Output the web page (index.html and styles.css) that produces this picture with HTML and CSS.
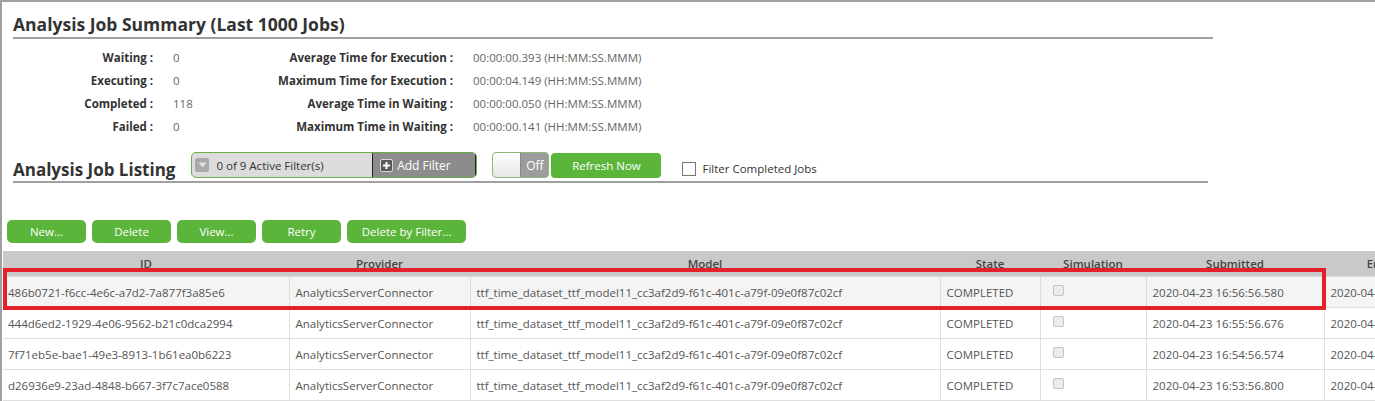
FILE: index.html
```html
<!DOCTYPE html>
<html lang="en">
<head>
<meta charset="utf-8">
<title>Analysis Jobs</title>
<link rel="stylesheet" href="styles.css">
</head>
<body>
<div class="page">
  <section class="summary">
    <h2 class="section-title">Analysis Job Summary (Last 1000 Jobs)</h2>
    <div class="stats">
      <span class="stat-label">Waiting :</span><span class="stat-value">0</span>
      <span class="stat-label">Average Time for Execution :</span><span class="stat-value">00:00:00.393 (HH:MM:SS.MMM)</span>
      <span class="stat-label">Executing :</span><span class="stat-value">0</span>
      <span class="stat-label">Maximum Time for Execution :</span><span class="stat-value">00:00:04.149 (HH:MM:SS.MMM)</span>
      <span class="stat-label">Completed :</span><span class="stat-value">118</span>
      <span class="stat-label">Average Time in Waiting :</span><span class="stat-value">00:00:00.050 (HH:MM:SS.MMM)</span>
      <span class="stat-label">Failed :</span><span class="stat-value">0</span>
      <span class="stat-label">Maximum Time in Waiting :</span><span class="stat-value">00:00:00.141 (HH:MM:SS.MMM)</span>
    </div>
  </section>

  <section class="listing">
    <div class="listing-head">
      <h2 class="section-title inline">Analysis Job Listing</h2>
      <div class="filter-bar">
        <div class="filter-status">
          <span class="filter-drop"><svg width="9" height="6" viewBox="0 0 9 6"><path d="M0.5 0.5h8L4.5 5.5z" fill="#e2e2e2"/></svg></span>
          <span>0 of 9 Active Filter(s)</span>
        </div>
        <div class="filter-add">
          <span class="plus-box"><svg width="9" height="9" viewBox="0 0 9 9"><path d="M4.5 1v7M1 4.5h7" stroke="#fff" stroke-width="2"/></svg></span>
          <span>Add Filter</span>
        </div>
      </div>
      <div class="toggle">
        <span class="toggle-knob"></span>
        <span class="toggle-text">Off</span>
      </div>
      <button class="btn btn-refresh">Refresh Now</button>
      <label class="check-label"><span class="check-box"></span>Filter Completed Jobs</label>
    </div>

    <div class="actions">
      <button class="btn btn-action">New...</button>
      <button class="btn btn-action">Delete</button>
      <button class="btn btn-action">View...</button>
      <button class="btn btn-action">Retry</button>
      <button class="btn btn-action wide">Delete by Filter...</button>
    </div>

    <div class="grid-wrap">
      <table class="jobs">
        <colgroup>
          <col class="c-id"><col class="c-provider"><col class="c-model"><col class="c-state"><col class="c-sim"><col class="c-sub"><col class="c-end">
        </colgroup>
        <thead>
          <tr><th>ID</th><th>Provider</th><th>Model</th><th>State</th><th>Simulation</th><th>Submitted</th><th>Ended</th></tr>
        </thead>
        <tbody>
          <tr class="selected">
            <td>486b0721-f6cc-4e6c-a7d2-7a877f3a85e6</td><td>AnalyticsServerConnector</td><td>ttf_time_dataset_ttf_model11_cc3af2d9-f61c-401c-a79f-09e0f87c02cf</td><td>COMPLETED</td><td class="sim"><span class="sim-box"></span></td><td>2020-04-23 16:56:56.580</td><td>2020-04-23 16:56:57.012</td>
          </tr>
          <tr>
            <td>444d6ed2-1929-4e06-9562-b21c0dca2994</td><td>AnalyticsServerConnector</td><td>ttf_time_dataset_ttf_model11_cc3af2d9-f61c-401c-a79f-09e0f87c02cf</td><td>COMPLETED</td><td class="sim"><span class="sim-box"></span></td><td>2020-04-23 16:55:56.676</td><td>2020-04-23 16:55:57.034</td>
          </tr>
          <tr>
            <td>7f71eb5e-bae1-49e3-8913-1b61ea0b6223</td><td>AnalyticsServerConnector</td><td>ttf_time_dataset_ttf_model11_cc3af2d9-f61c-401c-a79f-09e0f87c02cf</td><td>COMPLETED</td><td class="sim"><span class="sim-box"></span></td><td>2020-04-23 16:54:56.574</td><td>2020-04-23 16:54:56.921</td>
          </tr>
          <tr>
            <td>d26936e9-23ad-4848-b667-3f7c7ace0588</td><td>AnalyticsServerConnector</td><td>ttf_time_dataset_ttf_model11_cc3af2d9-f61c-401c-a79f-09e0f87c02cf</td><td>COMPLETED</td><td class="sim"><span class="sim-box"></span></td><td>2020-04-23 16:53:56.800</td><td>2020-04-23 16:53:57.188</td>
          </tr>
        </tbody>
      </table>
      <div class="highlight"></div>
    </div>
  </section>
</div>
</body>
</html>
```

FILE: styles.css
```css
html, body {
  margin: 0;
  padding: 0;
  background: #fff;
  overflow: hidden;
}

body {
  font-family: "Open Sans", "Noto Sans", sans-serif;
  color: #333;
  border-top: 2px solid #a0a0a0;
  border-left: 2px solid #a0a0a0;
  height: 400px;
  width: 1373px;
}

.page {
  padding-left: 1px;
}

.section-title {
  margin: 0 0 0 10px;
  font-size: 17.5px;
  font-weight: 700;
  color: #333;
  line-height: 22px;
  padding-top: 11px;
  padding-bottom: 2px;
  width: 1200px;
  border-bottom: 2px solid #a0a0a0;
}

/* summary figures */
.stats {
  display: grid;
  grid-template-columns: 140px 80px 180px auto;
  column-gap: 20px;
  grid-auto-rows: 23px;
  align-items: center;
  margin: 7px 0 0 10px;
  font-size: 11.5px;
  white-space: nowrap;
}

.stat-label {
  text-align: right;
  font-weight: 700;
  color: #333;
}

.stat-value {
  color: #666;
}

/* listing header */
.listing-head {
  display: flex;
  align-items: flex-end;
  width: 1195px;
  margin: 14px 0 0 10px;
  border-bottom: 2px solid #a0a0a0;
  padding-bottom: 3px;
}

.section-title.inline {
  margin: 0;
  padding: 0;
  border: 0;
  width: auto;
  font-size: 17px;
  line-height: 22px;
  margin-bottom: -3px;
}

.filter-bar {
  display: flex;
  margin-left: 16px;
  height: 24px;
  width: 284px;
  border: 1px solid #6aae4a;
  border-radius: 5px;
  overflow: hidden;
  background: #dcdcdc;
  font-size: 11.5px;
}

.filter-status {
  display: flex;
  align-items: center;
  gap: 7px;
  width: 178px;
  padding-left: 3px;
  color: #333;
  border-right: 1px solid #222;
}

.filter-drop {
  width: 14px;
  height: 14px;
  background: #a9a9a9;
  border-radius: 2px;
  display: flex;
  align-items: center;
  justify-content: center;
}

.filter-add {
  display: flex;
  align-items: center;
  gap: 4px;
  width: 96px;
  padding-left: 7px;
  background: #8c8c8c;
  color: #fff;
  font-size: 12px;
  border-right: 1px solid #222;
}

.plus-box {
  width: 11px;
  height: 11px;
  border: 1px solid #d8d8d8;
  border-radius: 2px;
  background: #5a5a5a;
  display: flex;
  align-items: center;
  justify-content: center;
}

.toggle {
  display: flex;
  margin-left: 15px;
  height: 24px;
  width: 55px;
  border: 1px solid #8cba78;
  border-radius: 4px;
  overflow: hidden;
  background: #9c9c9c;
}

.toggle-knob {
  width: 27px;
  background: linear-gradient(#ffffff, #e6e6e6);
  border-right: 1px solid #888;
}

.toggle-text {
  flex: 1;
  display: flex;
  align-items: center;
  justify-content: center;
  color: #fff;
  font-size: 12px;
}

.btn {
  font-family: inherit;
  border: 0;
  color: #fff;
  background: #5bb53b;
  font-size: 11.5px;
  padding: 0;
  cursor: pointer;
}

.btn-refresh {
  margin-left: 2px;
  width: 110px;
  height: 25px;
  border-radius: 4px;
}

.check-label {
  display: flex;
  align-items: center;
  gap: 6px;
  margin-left: 21px;
  margin-bottom: 2px;
  font-size: 11.5px;
  color: #333;
}

.check-box {
  width: 12px;
  height: 12px;
  border: 1px solid #777;
  background: #fff;
}

/* action buttons */
.actions {
  display: flex;
  gap: 6px;
  margin: 37px 0 0 4px;
}

.btn-action {
  width: 79px;
  height: 23px;
  border-radius: 5px;
}

.btn-action.wide {
  width: 119px;
}

/* job table */
.grid-wrap {
  position: relative;
  margin-top: 8px;
  width: 1500px;
}

.jobs {
  border-collapse: collapse;
  table-layout: fixed;
  width: 1441px;
  font-size: 11.5px;
  color: #555;
}

.c-id { width: 286px; }
.c-provider { width: 181px; }
.c-model { width: 470px; }
.c-state { width: 100px; }
.c-sim { width: 106px; }
.c-sub { width: 178px; }
.c-end { width: 120px; }

.jobs th {
  background: #c9c9c9;
  color: #444;
  font-weight: 600;
  font-size: 11.5px;
  height: 25px;
  padding: 0;
  text-align: center;
  vertical-align: middle;
  white-space: nowrap;
  overflow: hidden;
}

.jobs td {
  height: 30px;
  padding: 0 6px;
  border: 1px solid #dedede;
  white-space: nowrap;
  overflow: hidden;
  vertical-align: middle;
}

.jobs td:first-child {
  border-left: 0;
  padding-left: 5px;
}

.jobs td.sim {
  padding-left: 12px;
}

.jobs tr.selected td {
  background: #f4f4f4;
}

.sim-box {
  display: inline-block;
  width: 9px;
  height: 9px;
  border: 1px solid #c4c4c4;
  border-radius: 2px;
  background: #ececec;
  vertical-align: middle;
  position: relative;
  top: -3px;
}

/* red outline over the selected row */
.highlight {
  position: absolute;
  left: 0;
  top: 17px;
  width: 1315px;
  height: 34px;
  border: 4px solid #e3202c;
  pointer-events: none;
}
```
